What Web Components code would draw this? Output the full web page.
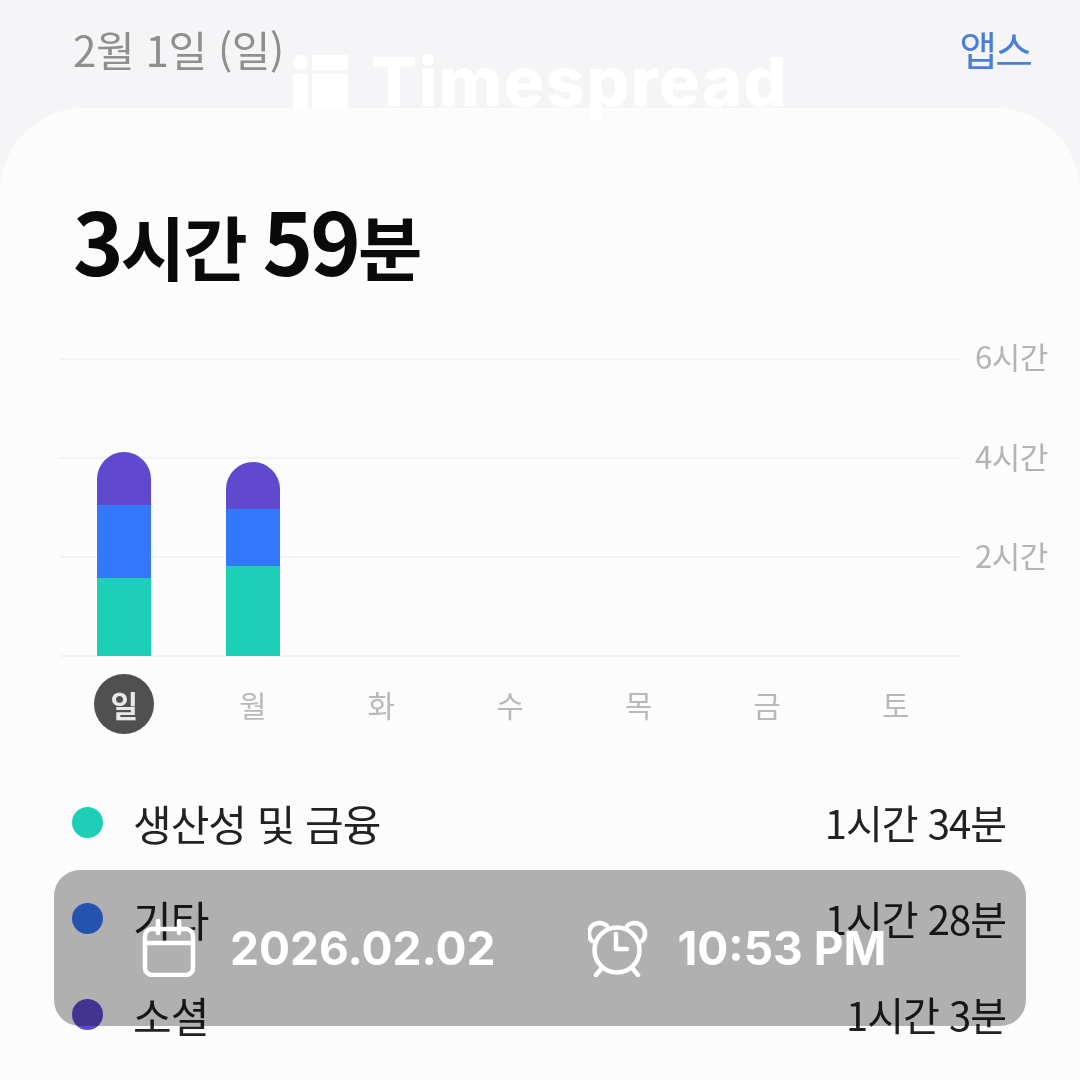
<!DOCTYPE html>
<html lang="ko">
<head>
<meta charset="utf-8">
<title>Screen time</title>
<style>
html, body { margin: 0; padding: 0; }
body {
    width: 1080px;
    height: 1080px;
    overflow: hidden;
    position: relative;
    background: #f5f5f7;
    font-family: "Noto Sans CJK KR", "Noto Sans", sans-serif;
}
</style>
</head>
<body>
<usage-header date="2월 1일 (일)" action="앱스"></usage-header>
<usage-card>
    <usage-total hours="3" minutes="59"></usage-total>
    <usage-chart></usage-chart>
    <legend-row color="#1dcfb6" name="생산성 및 금융" value="1시간 34분"></legend-row>
    <legend-row color="#3377fb" name="기타" value="1시간 28분"></legend-row>
    <legend-row color="#6049cf" name="소셜" value="1시간 3분"></legend-row>
</usage-card>
<brand-mark></brand-mark>
<time-stamp date="2026.02.02" time="10:53 PM"></time-stamp>

<script>
class usageHeader extends HTMLElement {
    constructor() {
        super();
        this.shadowDOM = this.attachShadow({mode:"open"})
    }

    connectedCallback() {
        this.shadowDOM.innerHTML = `
        <style>
        :host {
            display: flex;
            justify-content: space-between;
            align-items: center;
            height: 108px;
            box-sizing: border-box;
            padding: 0 49px 12px 73px;
            font-size: 42px;
            letter-spacing: -0.4px;
            filter: blur(0.6px);
        }
        .date { color: #8f8f8f; }
        .action { color: #4a7fd8; font-size: 41px; letter-spacing: -2px; }
        </style>
        <span class="date">${this.getAttribute("date")}</span>
        <span class="action">${this.getAttribute("action")}</span>`
    }
}

class brandMark extends HTMLElement {
    constructor() {
        super();
        this.shadowDOM = this.attachShadow({mode:"open"})
    }

    connectedCallback() {
        this.shadowDOM.innerHTML = `
        <style>
        :host {
            position: absolute;
            left: 293px;
            top: 55px;
            display: flex;
            align-items: flex-start;
            gap: 23px;
            color: #fff;
            font: 800 68px/53px "Inter", "Liberation Sans", sans-serif;
            letter-spacing: 1.4px;
        }
        svg { display: block; }
        span { display: block; }
        </style>
        <svg width="55" height="53" viewBox="0 0 55 53" fill="#fff">
            <circle cx="7.500" cy="7.500" r="7.500"/>
            <rect x="0" y="19" width="15" height="34"/>
            <rect x="19" y="0" width="36" height="15"/>
            <rect x="19" y="19" width="36" height="34"/>
        </svg>
        <span>Timespread</span>`
    }
}

class usageCard extends HTMLElement {
    constructor() {
        super();
        this.shadowDOM = this.attachShadow({mode:"open"})
    }

    connectedCallback() {
        this.shadowDOM.innerHTML = `
        <style>
        :host {
            display: block;
            height: 972px;
            box-sizing: border-box;
            padding-top: 85px;
            background: #fcfcfc;
            border-radius: 84px 84px 0 0;
            filter: blur(0.6px);
        }
        </style>
        <slot></slot>`
    }
}

class usageTotal extends HTMLElement {
    constructor() {
        super();
        this.shadowDOM = this.attachShadow({mode:"open"})
    }

    connectedCallback() {
        this.shadowDOM.innerHTML = `
        <style>
        :host {
            display: flex;
            align-items: baseline;
            height: 92px;
            padding-left: 73px;
            color: #0a0a0a;
            font-weight: 700;
            line-height: 92px;
        }
        .num { font-size: 86px; letter-spacing: -3px; }
        .unit { font-size: 70px; letter-spacing: -2px; }
        .gap { width: 17px; }
        </style>
        <span class="num">${this.getAttribute("hours")}</span><span class="unit">시간</span>
        <span class="gap"></span>
        <span class="num">${this.getAttribute("minutes")}</span><span class="unit">분</span>`
    }
}

class usageChart extends HTMLElement {
    constructor() {
        super();
        this.shadowDOM = this.attachShadow({mode:"open"})
    }

    connectedCallback() {
        const days = ["일", "월", "화", "수", "목", "금", "토"]
        // heights of each stack in px, bottom to top
        const bars = [[78, 73, 53], [90, 57, 47]]
        const cols = days.map((d, i) => {
            const stack = bars[i]
            const inner = stack ? `<div class="bar">
                <i style="height:${stack[2]}px;background:#6049cf"></i>
                <i style="height:${stack[1]}px;background:#3377fb"></i>
                <i style="height:${stack[0]}px;background:#1dcfb6"></i>
            </div>` : ""
            return `<div class="col">${inner}</div>`
        }).join("")
        const labels = days.map((d, i) => `<span class="day${i === 0 ? " on" : ""}">${d}</span>`).join("")

        this.shadowDOM.innerHTML = `
        <style>
        :host {
            display: grid;
            grid-template-columns: 900px 1fr;
            margin: 73px 0 0 60px;
        }
        .plot {
            display: grid;
            height: 299px;
        }
        .lines, .bars { grid-area: 1 / 1; }
        .lines {
            display: flex;
            flex-direction: column;
            justify-content: space-between;
        }
        .lines i { display: block; height: 2px; background: #f3f3f3; }
        .bars {
            display: grid;
            grid-template-columns: repeat(7, 1fr);
            padding-bottom: 1px;
        }
        .col { display: flex; justify-content: center; align-items: flex-end; }
        .bar {
            width: 54px;
            display: flex;
            flex-direction: column;
            border-radius: 27px 27px 0 0;
            overflow: hidden;
        }
        .bar i { display: block; }
        .scale {
            display: flex;
            flex-direction: column;
            height: 299px;
            margin-top: -3px;
            padding-left: 15px;
            color: #b4b4b4;
            font-size: 31px;
            letter-spacing: -0.5px;
        }
        .scale span { height: 99.5px; line-height: 2px; }
        .days {
            display: grid;
            grid-template-columns: repeat(7, 1fr);
            justify-items: center;
            margin-top: 17px;
            color: #b9b9b9;
            font-size: 30px;
        }
        .day {
            width: 60px;
            height: 60px;
            border-radius: 50%;
            display: flex;
            align-items: center;
            justify-content: center;
        }
        .day.on { background: #505050; color: #e8e8e8; font-weight: 700; }
        </style>
        <div class="plot">
            <div class="lines"><i></i><i></i><i></i><i></i></div>
            <div class="bars">${cols}</div>
        </div>
        <div class="scale"><span>6시간</span><span>4시간</span><span>2시간</span></div>
        <div class="days">${labels}</div>`
    }
}

class legendRow extends HTMLElement {
    constructor() {
        super();
        this.shadowDOM = this.attachShadow({mode:"open"})
    }

    connectedCallback() {
        this.shadowDOM.innerHTML = `
        <style>
        :host {
            display: flex;
            align-items: center;
            height: 96px;
            padding: 0 74px 0 72px;
            color: #222;
            font-size: 42px;
            letter-spacing: -1px;
        }
        :host(:first-of-type) { margin-top: 40px; }
        .dot {
            width: 31px;
            height: 31px;
            border-radius: 50%;
            background: ${this.getAttribute("color")};
            margin-right: 30px;
        }
        .name { flex: 1; }
        .value { font-size: 40px; letter-spacing: -1px; }
        </style>
        <span class="dot"></span>
        <span class="name">${this.getAttribute("name")}</span>
        <span class="value">${this.getAttribute("value")}</span>`
    }
}

class timeStamp extends HTMLElement {
    constructor() {
        super();
        this.shadowDOM = this.attachShadow({mode:"open"})
    }

    connectedCallback() {
        this.shadowDOM.innerHTML = `
        <style>
        :host {
            position: absolute;
            left: 54px;
            top: 870px;
            width: 972px;
            height: 156px;
            box-sizing: border-box;
            padding: 0 0 0 88px;
            display: flex;
            align-items: center;
            border-radius: 26px;
            background: rgba(0, 0, 0, 0.3);
            color: #fff;
            font: 700 46px "Inter", "Liberation Sans", sans-serif;
        }
        svg { display: block; fill: none; stroke: #fff; stroke-width: 4.500; stroke-linecap: round; stroke-linejoin: round; }
        .date { margin: 0 92px 0 34px; }
        .time { margin-left: 30px; }
        </style>
        <svg width="54" height="58" viewBox="0 0 54 58">
            <rect x="3" y="10" width="48" height="46" rx="7"/>
            <path d="M3 24h48M16 2v12M37 2v12"/>
        </svg>
        <span class="date">${this.getAttribute("date")}</span>
        <svg width="60" height="58" viewBox="0 0 60 58">
            <circle cx="29" cy="31" r="22.500"/>
            <path d="M28 15v15h11M4 22a10.500 10.500 0 0 1 15-15M54 22a10.500 10.500 0 0 0-15-15M13 50l-5 6M45 50l5 6"/>
        </svg>
        <span class="time">${this.getAttribute("time")}</span>`
    }
}

customElements.define("usage-header", usageHeader);
customElements.define("brand-mark", brandMark);
customElements.define("usage-card", usageCard);
customElements.define("usage-total", usageTotal);
customElements.define("usage-chart", usageChart);
customElements.define("legend-row", legendRow);
customElements.define("time-stamp", timeStamp);
</script>
</body>
</html>
